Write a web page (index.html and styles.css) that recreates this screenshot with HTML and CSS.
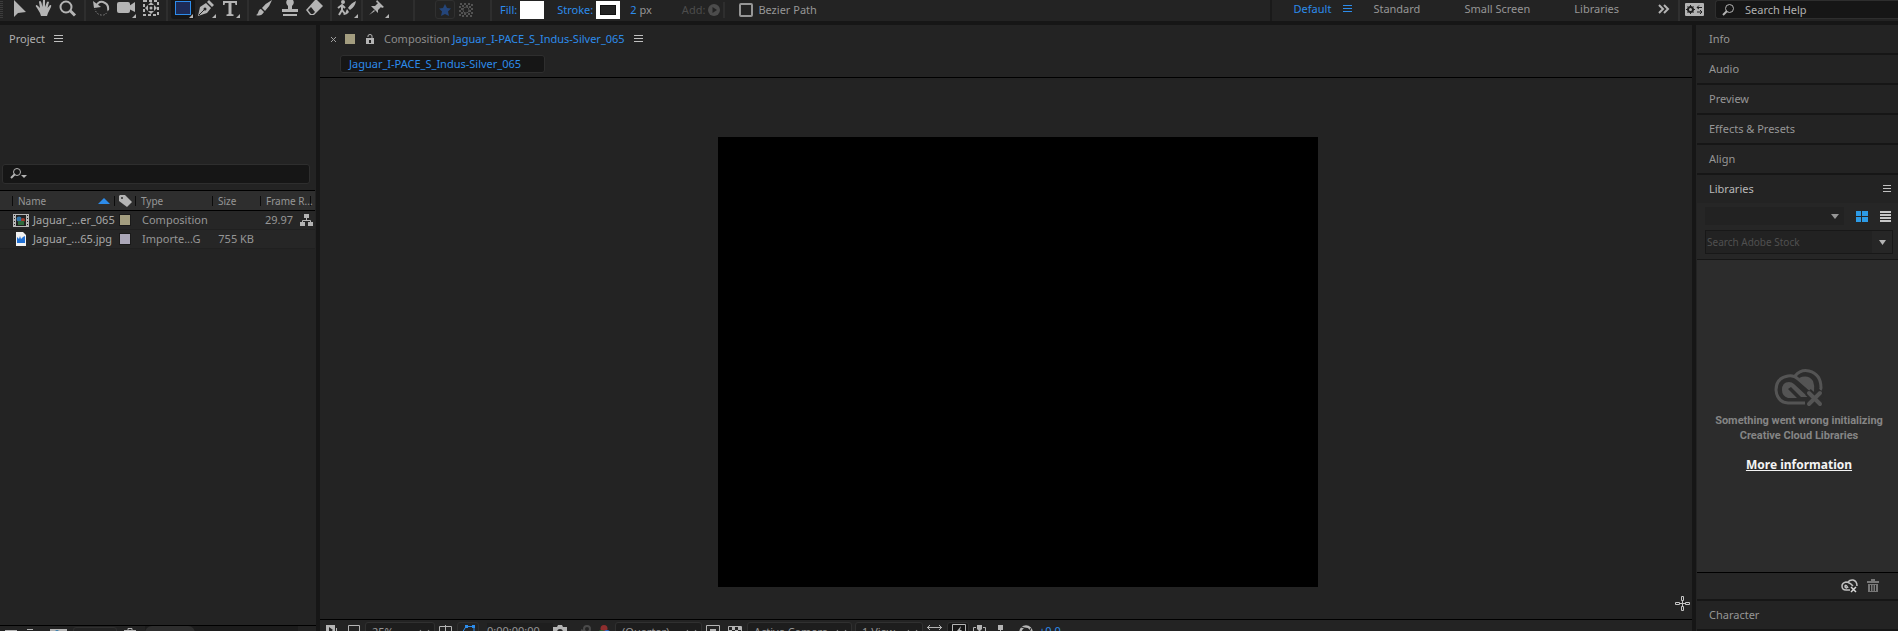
FILE: index.html
```
<!DOCTYPE html>
<html lang="en">
<head>
<meta charset="utf-8">
<title>Composition editor</title>
<link rel="stylesheet" href="styles.css">
</head>
<body>
<header class="toolbar">
  <span class="grip"></span>
  <div class="tools">
    <button class="tool" aria-label="Selection"><svg width="20" height="20"><path d="M4 0V17L8 13L16 12Z"/></svg></button>
    <button class="tool" aria-label="Hand"><svg width="20" height="20"><path d="M3 8Q1 6 2 5Q3 4.500 6 8L5 2Q5 1 6 1Q7 1 7.500 3L8.500 7L9 0H11V7L13 2Q14 1 15 2L13.500 8L16 5Q18 4.500 17 7L14 13L13 16H7L6 13Z"/></svg></button>
    <button class="tool" aria-label="Zoom"><svg width="20" height="20"><circle class="line2" cx="8" cy="7" r="5.500"/><path class="line3" d="M12 10.500L17 15.500"/></svg></button>
  </div>
  <div class="tools tight">
    <button class="tool" aria-label="Rotation"><svg width="20" height="20"><path class="line2" d="M4 7Q6 1 11 2Q17 4 16 10"/><path d="M1 1L2 8L9 7Z"/><path class="dots" d="M16 10Q14 16 9 15Q4 14 3 9"/></svg></button>
    <button class="tool wide" aria-label="Camera"><svg width="24" height="20"><rect x="2" y="2" width="13" height="11" rx="2"/><path d="M14 6L20 2V12L14 9ZM21 14V18H17Z"/></svg></button>
    <button class="tool" aria-label="Pan behind"><svg width="20" height="20"><rect class="dash" x="3" y="1" width="14" height="14"/><path d="M10 2L13 5H7ZM10 14L13 11H7ZM4 8L7 5V11ZM16 8L13 5V11Z"/><circle cx="10" cy="8" r="1.500"/></svg></button>
  </div>
  <div class="tools tight">
    <button class="tool on" aria-label="Rectangle"><svg width="22" height="20"><rect x="3.500" y="1.500" width="15" height="13" fill="#1d2b57" stroke="#2d8ceb"/><path d="M21 14V18H17Z"/></svg></button>
    <button class="tool" aria-label="Pen"><svg width="24" height="20"><path d="M3 16L5 7L11 3L16 8L12 13ZM12 2L14 0L19 5L17 7Z"/><path d="M4 15L10 9" stroke="#232323"/><circle cx="10" cy="9" r="1.500" fill="#232323"/><path d="M21 14V18H17Z"/></svg></button>
    <button class="tool wide" aria-label="Type"><svg width="24" height="20"><path d="M3 1H17V5H15.500L15 3H11.500V14L13.500 14.500V16H6.500V14.500L8.500 14V3H5L4.500 5H3ZM20 14V18H16Z"/></svg></button>
  </div>
  <div class="tools tight">
    <button class="tool wide" aria-label="Brush"><svg width="24" height="20"><path d="M19 0Q13 3 9 8L12 11Q17 6 19 0ZM8 9Q6 9 5 13Q4 15 3 15Q8 17 11 12Z"/></svg></button>
    <button class="tool wide" aria-label="Clone stamp"><svg width="24" height="20"><path d="M9 0H15Q17 3 14 6V9H20V12H4V9H10V6Q7 3 9 0ZM5 14H19V16H5Z"/></svg></button>
    <button class="tool wide" aria-label="Eraser"><svg width="24" height="20"><path d="M12 0H14L20 6L11 15H7L3 10Z"/><path d="M5 10L8 7L12 12L10 14H8Z" fill="#232323"/></svg></button>
  </div>
  <div class="tools tight">
    <button class="tool roto" aria-label="Roto brush"><svg width="24" height="20"><circle cx="8" cy="2" r="2"/><path class="line2" d="M3 8L7 5L10 8M7 5V10L4 15M7 10L10 14"/><path d="M21 1Q16 3 13 8L15 10Q20 7 21 1ZM12 9L14 12Q12 15 8 15Q11 13 12 9ZM23 14V18H19Z"/></svg></button>
  </div>
  <div class="tools last">
    <button class="tool wide" aria-label="Puppet pin"><svg width="24" height="20"><path d="M10 0L17 7L15 8L14 7L11 10V13L4 6L8 6L11 3L9 2ZM7 10L2 15L8 11ZM22 14V18H18Z"/></svg></button>
  </div>
  <div class="shape-mode">
    <button class="mode box" aria-label="Creates shape"><svg width="18" height="18"><path fill="#24457a" d="M9 3L11 7L15 7.500L12 10.500L13 15L9 13L5 15L6 10.500L3 7.500L7 7Z"/></svg></button>
    <button class="mode" aria-label="Creates mask"><svg width="16" height="18"><path fill="none" stroke="#525252" stroke-width="2" stroke-dasharray="2 2" d="M2 3H14V15H2ZM4 5H12V13H4Z"/><circle cx="8" cy="9" r="3" fill="#232323" stroke="#525252"/></svg></button>
  </div>
  <div class="options">
    <button class="link">Fill:</button><button class="swatch fill" aria-label="Fill colour"></button>
    <button class="link stroke">Stroke:</button><button class="swatch outline" aria-label="Stroke colour"></button>
    <span class="width"><button class="link">2</button> px</span>
    <button class="add" disabled>Add: <svg width="12" height="12"><circle cx="6" cy="6" r="6" fill="#4c4c4c"/><path d="M4.500 3L9 6L4.500 9Z" fill="#232323"/></svg></button>
    <label class="bezier"><input type="checkbox">Bezier Path</label>
  </div>
  <nav class="workspaces">
    <button class="active">Default <svg width="9" height="8"><path class="menu-lines" d="M0 .500H9M0 3.500H9M0 6.500H9"/></svg></button>
    <button>Standard</button>
    <button>Small Screen</button>
    <button>Libraries</button>
    <button class="more" aria-label="More workspaces"><svg width="12" height="10"><path d="M1 1L5 5L1 9M6 1L10 5L6 9"/></svg></button>
  </nav>
  <button class="sync" aria-label="Sync settings"><svg width="19" height="13"><rect width="19" height="13" rx="1" fill="#b4b4b4"/><circle cx="5.500" cy="6.500" r="2.500" fill="none" stroke="#222" stroke-width="2"/><path d="M5.500 2V4M5.500 9V11M1 6.500H3M8 6.500H10M2.500 3.500L4 5M8.500 3.500L7 5M2.500 9.500L4 8M8.500 9.500L7 8M12 4.500H17M14 2.500L12 4.500L14 6M12 9H17M15 7L17 9L15 11" fill="none" stroke="#222"/></svg></button>
  <label class="help"><svg width="12" height="12"><circle class="line1" cx="7.500" cy="4.500" r="4"/><path class="line2" d="M5 7L1 11"/></svg><input type="search" placeholder="Search Help" aria-label="Search Help"></label>
</header>

<main class="work">
  <section class="panel project">
    <h2 class="title">Project <button class="menu" aria-label="Project menu"><svg width="9" height="8"><path class="menu-lines" d="M0 .500H9M0 3.500H9M0 6.500H9"/></svg></button></h2>
    <div class="preview"></div>
    <label class="find"><svg width="18" height="12"><circle class="line1" cx="7" cy="4" r="3.500"/><path class="line2" d="M5 6L1 10"/><path d="M11 7H17L14 10Z"/></svg><input type="search" aria-label="Search project"></label>
    <table class="items">
      <colgroup><col class="c-name"><col class="c-label"><col class="c-type"><col class="c-size"><col class="c-rate"><col class="c-flow"></colgroup>
      <thead><tr>
        <th class="first"><div>Name<svg width="12" height="6"><path fill="#2d8ceb" d="M0 6L6 0L12 6Z"/></svg></div></th>
        <th class="tag"><svg width="13" height="12"><path d="M0 1L1 0H6L13 7L8 12L0 6Z"/><circle cx="3" cy="3" r="1" fill="#2e2e2e"/></svg></th>
        <th>Type</th><th>Size</th><th colspan="2" class="rate">Frame R...</th>
      </tr></thead>
      <tbody>
        <tr><td class="name"><div><svg width="16" height="13"><rect width="16" height="13" fill="#b8b8b8"/><path stroke="#232323" stroke-dasharray="1 2" d="M1.500 1V13M14.500 1V13"/><rect x="3" y="1" width="10" height="11" fill="#222"/><circle cx="6" cy="5" r="2.500" fill="#3274a8"/><circle cx="10" cy="6" r="2" fill="#a23c2c"/><rect x="5" y="7" width="6" height="4" fill="#2f6a3c"/></svg>Jaguar_...er_065</div></td>
          <td><i class="chip sand"></i></td><td>Composition</td><td></td><td class="num">29.97</td>
          <td class="flow"><svg width="13" height="12"><path d="M4 0H9V4H4ZM0 8H5V12H0ZM8 8H13V12H8Z"/><path fill="none" stroke="#b4b4b4" d="M6.500 4V6.500M2.500 8V6.500H10.500V8"/></svg></td></tr>
        <tr><td class="name"><div><svg width="16" height="14"><path fill="#f2f2f2" d="M3 0H10L13 3V14H3Z"/><path fill="#2271d4" d="M4 5L6 7L7 4L8 7L10 5L12 4V11H4Z"/></svg>Jaguar_...65.jpg</div></td>
          <td><i class="chip lilac"></i></td><td>Importe...G</td><td class="num">755 KB</td><td></td><td></td></tr>
      </tbody>
    </table>
    <footer class="foot project-foot">
      <button aria-label="Interpret footage"><svg width="13" height="12"><path d="M0 2H12V12H0Z"/></svg></button>
      <button aria-label="New folder"><svg width="14" height="12"><path d="M0 1H6V3H13V12H0Z"/><path stroke="#232323" d="M0 2.500H6"/></svg></button>
      <button aria-label="New composition"><svg width="17" height="12"><path d="M0 1H17V12H0Z"/><path fill="#232323" d="M3 3H14V12H3Z"/><circle cx="7" cy="4" r="2" fill="#3a7fae"/></svg></button>
      <button class="bpc" aria-label="Bit depth"></button>
      <button aria-label="Delete"><svg width="12" height="12"><path fill="none" stroke="#b4b4b4" d="M0 2.500H12M4 2V.500H8V2M2.500 3V12H9.500V3"/></svg></button>
      <div class="scroll"><span></span></div>
    </footer>
  </section>

  <section class="panel comp">
    <div class="title comp-title">
      <button class="close" aria-label="Close"><svg width="5" height="6"><path d="M0 1L5 6M5 1L0 6"/></svg></button>
      <i class="chip sand big"></i>
      <svg width="9" height="10"><path d="M0 4H8V10H0Z"/><path class="line1" d="M2 3V2Q2 .500 4 .500Q6 .500 6 2V4"/><path fill="#232323" d="M3 6H5V9H3Z"/></svg>
      <h2>Composition <a href="#">Jaguar_I-PACE_S_Indus-Silver_065</a></h2>
      <button class="menu" aria-label="Composition menu"><svg width="9" height="8"><path class="menu-lines" d="M0 .500H9M0 3.500H9M0 6.500H9"/></svg></button>
    </div>
    <div class="crumbs"><a href="#">Jaguar_I-PACE_S_Indus-Silver_065</a></div>
    <div class="viewer">
      <div class="canvas"></div>
      <svg class="cursor" width="15" height="15"><path fill="none" stroke="#c4c4c4" d="M6.500 .500H8.500V4.500H6.500ZM6.500 10.500H8.500V14.500H6.500ZM.500 6.500H4.500V8.500H.500ZM10.500 6.500H14.500V8.500H10.500Z"/><path fill="#c4c4c4" d="M7 5H8V10H7ZM5 7H10V8H5Z"/></svg>
    </div>
    <footer class="foot comp-foot">
      <button class="i-preview" aria-label="Always preview"><svg width="14" height="14"><path d="M0 0H9V12H0Z"/><path fill="#232323" d="M3 2L7 5L3 8Z"/><path d="M10 3H11V14H10ZM12 6H13V14H12Z"/></svg></button>
      <button class="i-monitor" aria-label="Main viewer"><svg width="13" height="12"><path class="line1" d="M.500 .500H11.500V9.500H.500Z"/></svg></button>
      <span class="pick zoom"><select aria-label="Magnification"><option>25%</option></select></span>
      <button class="i-grid" aria-label="Grid and guides"><svg width="14" height="14"><path class="line1" d="M.500 1.500H12.500V13H.500ZM6.500 0V14M3 8H10"/></svg></button>
      <button class="i-mask box" aria-label="Mask visibility"><svg width="16" height="14"><path fill="none" stroke="#2d8ceb" d="M1 9L5 2.500H13V12"/><path fill="#2d8ceb" d="M11 1H14V4H11ZM4 1H7V4H4ZM0 7H3V10H0Z"/></svg></button>
      <button class="time">0:00:00:00</button>
      <button class="i-cam" aria-label="Take snapshot"><svg width="14" height="12"><path d="M0 2H4L5 0H9L10 2H14V12H0Z"/><circle cx="7" cy="7" r="3" fill="#232323"/></svg></button>
      <button class="i-show" aria-label="Show snapshot"><svg width="15" height="14"><g fill="none" stroke="#4a4a4a" stroke-width="2"><circle cx="10" cy="4" r="3"/><circle cx="4" cy="10" r="3"/><path d="M4 5L10 8"/></g></svg></button>
      <button class="i-rgb" aria-label="Channels"><svg width="13" height="14"><circle cx="6" cy="3.500" r="3.500" fill="#8e2e2e"/><circle cx="3.500" cy="8.500" r="3.500" fill="#2e6b35"/><circle cx="9" cy="8.500" r="3.500" fill="#2c6fd0"/></svg></button>
      <span class="pick quality"><select aria-label="Resolution"><option>(Quarter)</option></select></span>
      <button class="i-roi" aria-label="Region of interest"><svg width="14" height="13"><path class="line1" d="M.500 .500H13.500V12H.500Z"/><path d="M4 4H10V10H4Z"/></svg></button>
      <button class="i-alpha" aria-label="Transparency grid"><svg width="14" height="13"><path class="line1" d="M.500 1.500H13.500V12H.500Z"/><path d="M4 2H7V5H4ZM10 2H13V5H10ZM1 5H4V8H1ZM7 5H10V8H7ZM4 8H7V11H4Z"/></svg></button>
      <span class="pick view"><select aria-label="3D view"><option>Active Camera</option></select></span>
      <span class="pick layout"><select aria-label="View layout"><option>1 View</option></select></span>
      <button class="i-ratio" aria-label="Pixel aspect correction"><svg width="15" height="12"><path class="line1" d="M0 2.500H15M3 0L.500 2.500L3 5M12 0L14.500 2.500L12 5"/></svg></button>
      <button class="i-fast box dark" aria-label="Fast previews"><svg width="14" height="13"><path class="line1" d="M.500 .500H13.500V12H.500Z"/><path d="M9 2L5 7H7L6 11L10 6H8Z"/></svg></button>
      <button class="i-timeline" aria-label="Timeline"><svg width="13" height="14"><path d="M4 0H9V4L7 6V14H6V6L4 4Z"/><path class="line1" d="M3 2.500H.500V13M10 2.500H12.500V13"/></svg></button>
      <button class="i-flow" aria-label="Flowchart"><svg width="8" height="14"><path d="M1 0H6V5H4V8H6V14H1V8H3V5H1Z"/></svg></button>
      <button class="i-expo" aria-label="Reset exposure"><svg width="14" height="13"><circle cx="7" cy="7" r="5.500" fill="none" stroke="#b4b4b4" stroke-width="2.500"/><path stroke="#232323" d="M2 2L9 4M12 3L9 10M1 9L6 11"/></svg></button>
      <button class="link">+0.0</button>
    </footer>
  </section>

  <aside class="side">
    <h2 class="row">Info</h2>
    <h2 class="row">Audio</h2>
    <h2 class="row">Preview</h2>
    <h2 class="row">Effects &amp; Presets</h2>
    <h2 class="row">Align</h2>
    <section class="libs">
      <h2 class="row open">Libraries <button class="menu" aria-label="Libraries menu"><svg width="8" height="8"><path class="menu-lines" d="M0 .500H8M0 3.500H8M0 6.500H8"/></svg></button></h2>
      <div class="lib-tools">
        <div class="lib-line">
          <span class="lib-pick"><select aria-label="Library"><option></option></select></span>
          <button aria-label="Grid view"><svg width="12" height="11"><path fill="#2d9be6" d="M0 0H5V5H0ZM6 0H12V5H6ZM0 6H5V11H0ZM6 6H12V11H6Z"/></svg></button>
          <button aria-label="List view"><svg width="11" height="11"><path fill="#c8c8c8" d="M0 0H11V2H0ZM0 3H11V5H0ZM0 6H11V8H0ZM0 9H11V11H0Z"/></svg></button>
        </div>
        <div class="stock"><input type="search" placeholder="Search Adobe Stock" aria-label="Search Adobe Stock"><button aria-label="Search scope"><svg width="7" height="5"><path d="M0 0H7L3.500 5Z"/></svg></button></div>
      </div>
      <div class="lib-body">
        <svg class="cc" width="50" height="38" viewBox="0 0 50 38"><g fill="none" stroke="#545454" stroke-width="3"><path d="M21 7Q27 0 35 2Q47 5 47 19Q47 20 46 21M31 34H14Q3 33 2 21Q2 9 14 7Q20 6 24 10L38 22"/></g><path fill="#545454" d="M25 9Q34 5 39 12Q41 17 40 23L37 22L27 12ZM8 21Q8 13 15 13Q18 13 20 15L34 28H27L17 18L14 20L23 29H14Q8 27 8 21Z"/><path stroke="#2c2c2c" stroke-width="8" d="M34 23L48 36M48 23L34 36"/><path stroke="#545454" stroke-width="4" stroke-linecap="round" d="M35 24L46 35M46 24L35 35"/></svg>
        <p>Something went wrong initializing<br>Creative Cloud Libraries</p>
        <a href="#">More information</a>
      </div>
      <div class="lib-foot">
        <button aria-label="Creative Cloud status"><svg width="17" height="14" viewBox="0 0 17 14"><path fill="none" stroke="#c0c0c0" stroke-width="1.500" d="M7 3Q9 .500 12 1Q16 2 16 7M9 11H5Q1 11 1 7Q1 4 5 3Q8 3 12 7M7 9Q5 5 4 7Q4 9 6 9"/><path stroke="#d8d8d8" stroke-width="1.500" d="M10 8L15 13M15 8L10 13"/></svg></button>
        <button aria-label="Delete"><svg width="12" height="14"><path fill="#777" d="M0 2H4V0H8V2H12V4H0ZM1 5H11V13H1Z"/><path stroke="#232323" d="M3.500 6V12M6 6V12M8.500 6V12"/></svg></button>
      </div>
    </section>
    <h2 class="row">Character</h2>
    <h2 class="row">Paragraph</h2>
  </aside>
</main>
</body>
</html>
```
FILE: styles.css
```
* { box-sizing: border-box; }
body {
  margin: 0;
  height: 100vh;
  overflow: hidden;
  background: #161616;
  color: #969696;
  font: 11px/16px "Noto Sans", "Open Sans", sans-serif;
}
button, input, select { font: inherit; color: inherit; }
button {
  margin: 0;
  padding: 0;
  border: 0;
  background: none;
  display: inline-flex;
  align-items: center;
  justify-content: center;
  white-space: nowrap;
}
input { min-width: 0; border: 0; padding: 0; background: none; outline: 0; }
h2 { margin: 0; font: inherit; }
a, .link { color: #2d8ceb; text-decoration: none; }
svg { display: block; flex: none; fill: #b4b4b4; }
.line1, .line2, .line3 { fill: none; stroke: #b4b4b4; stroke-width: 1; }
.line2 { stroke-width: 2; }
.line3 { stroke-width: 3; }
.dots { fill: none; stroke: #b4b4b4; stroke-dasharray: 1 2; }
.dash { fill: none; stroke: #b4b4b4; stroke-width: 2; stroke-dasharray: 3 2; }
.menu-lines { stroke: #c0c0c0; }

/* toolbar */
.toolbar {
  display: flex;
  height: 21px;
  background: #232323;
  white-space: nowrap;
}
.grip {
  width: 3px;
  margin: 0 5px 3px 0;
  background: repeating-linear-gradient(#232323 0 1px, #3c3c3c 1px 2px);
}
.tools { display: flex; padding-right: 4px; margin-right: 4px; border-right: 2px solid #2e2e2e; }
.tools.tight { padding-right: 3px; margin-right: 3px; }
.tools.last { padding-right: 22px; margin-right: 20px; }
.tool { width: 24px; align-items: flex-start; }
.tool.wide { width: 25px; }
.tool.roto { width: 23px; }
.tool.on { height: 19px; background: #161616; border-radius: 0 0 3px 3px; }
.shape-mode { display: flex; gap: 3px; padding-right: 16px; border-right: 2px solid #2e2e2e; }
.mode.box { width: 20px; height: 19px; border: 1px solid #303030; border-radius: 3px; }
.mode { height: 19px; }
.options { display: flex; flex: 1; align-items: center; padding: 0 0 2px 8px; }
.swatch { width: 24px; height: 18px; margin-left: 3px; background: #fff; }
.link.stroke { margin-left: 13px; }
.swatch.outline { border: 4px solid #fff; background: #232323; outline: 1px solid #111; outline-offset: -5px; }
.width { margin-left: 10px; display: flex; gap: 3px; }
.add { margin-left: 30px; padding-right: 3px; gap: 3px; color: #4c4c4c; border-right: 2px solid #2e2e2e; }
.bezier { display: flex; align-items: center; gap: 5px; margin-left: 14px; }
.bezier input { appearance: none; width: 14px; height: 14px; margin: 0; border: 2px solid #969696; border-radius: 2px; }
.workspaces { display: flex; gap: 44px; padding: 0 8px 4px 22px; border-left: 2px solid #1a1a1a; border-right: 2px solid #303030; }
.workspaces .active { color: #2d8ceb; gap: 12px; margin-right: -23px; }
.workspaces .active .menu-lines { stroke: #2d8ceb; }
.workspaces .more { margin-left: -5px; }
.more path { fill: none; stroke: #b4b4b4; stroke-width: 2; }
.sync { margin: 0 11px 3px 5px; }
.help {
  display: flex;
  align-items: center;
  gap: 11px;
  width: 183px;
  height: 19px;
  padding-left: 6px;
  background: #161616;
  border: 2px solid #2e2e2e;
  border-width: 1px 0 1px 1px;
  border-radius: 3px 0 0 3px;
}
.help input { width: 120px; }
.help input::placeholder { color: #b0b0b0; opacity: 1; }

/* columns; the lowest strip runs past the window edge */
.work {
  display: grid;
  grid-template-columns: 316px 1fr 202px;
  gap: 4px;
  height: calc(100vh + 7px);
  padding-top: 4px;
}
.panel { display: flex; flex-direction: column; min-width: 0; background: #232323; }
.title { display: flex; align-items: center; gap: 9px; height: 28px; padding-left: 9px; color: #b0b0b0; }
.foot { display: flex; align-items: flex-start; border-top: 1px solid #000; background: #232323; overflow: hidden; }
.chip { display: block; width: 10px; height: 10px; outline: 1px solid #1a1a1a; }
.sand { background: #a39d7f; }
.lilac { background: #aba7b8; }

/* project */
.preview { height: 110px; }
.find {
  display: flex;
  align-items: center;
  height: 20px;
  margin: 1px 6px 6px 2px;
  padding-left: 7px;
  background: #161616;
  border: 1px solid #2e2e2e;
  border-radius: 3px;
}
.find input { flex: 1; }
.items { width: 315px; table-layout: fixed; border-collapse: collapse; }
.c-name { width: 114px; }
.c-label { width: 21px; }
.c-type { width: 77px; }
.c-size { width: 48px; }
.c-rate { width: 39px; }
.items thead tr { height: 20px; background: #2e2e2e; border-top: 1px solid #000; border-bottom: 1px solid #000; }
.items th {
  padding: 0 0 0 6px;
  font-weight: 400;
  font-size: 10px;
  text-align: left;
  background: linear-gradient(#0c0c0c, #0c0c0c) left center / 1px 10px no-repeat;
}
.items th.first { padding: 0 4px 0 18px; background-position: 12px center; }
.items th.tag { padding-left: 5px; }
.first div { display: flex; align-items: center; justify-content: space-between; }
.items th.rate { background: linear-gradient(#0c0c0c, #0c0c0c) left center / 1px 10px no-repeat, linear-gradient(#0c0c0c, #0c0c0c) 50px center / 1px 10px no-repeat; }
.items tbody tr { height: 19px; background: #262626; border-bottom: 1px solid #202020; }
.items td { padding: 0 0 0 7px; white-space: nowrap; }
.items td:nth-child(2) { padding-left: 6px; }
.items td.name { padding: 0 0 0 13px; color: #a8a8a8; }
.name div { display: flex; align-items: center; gap: 4px; }
.items td.num { padding: 0 6px 0 0; text-align: right; }
.items td.flow { padding: 0 0 0 1px; }
.project-foot { height: 34px; margin-top: auto; padding-left: 5px; }
.project-foot button { margin: 2px 9px 0 0; }
.project-foot .bpc { width: 44px; height: 20px; margin: 1px 7px 0 -3px; border: 1px solid #303030; border-radius: 3px; }
.scroll { flex: 1; height: 16px; margin-right: 18px; background: #1c1c1c; }
.scroll span { display: block; width: 50px; height: 14px; border-radius: 7px; background: #2e2e2e; }

/* composition */
.comp-title { height: 30px; padding: 0 0 2px 11px; color: #8c8c8c; }
.comp-title .chip { margin-right: 2px; outline: 0; }
.close path { fill: none; stroke: #a0a0a0; }
.crumbs { padding: 0 20px 4px; border-bottom: 1px solid #000; }
.crumbs a { display: block; width: 205px; height: 18px; padding-left: 8px; line-height: 16px; background: #161616; border: 1px solid #2e2e2e; border-radius: 3px; }
.viewer { position: relative; display: flex; flex: 1; align-items: center; justify-content: center; padding: 26px 0 0 24px; }
.canvas { width: 600px; aspect-ratio: 4 / 3; background: #000; }
.cursor { position: absolute; right: 2px; bottom: 8px; }
.comp-foot { height: 40px; padding-left: 6px; }
.comp-foot > button { height: 16px; margin-top: 5px; align-items: flex-start; justify-content: flex-start; }
.comp-foot .box { height: 19px; margin-top: 2px; padding: 1px 0 0 3px; border: 1px solid #303030; border-radius: 3px; }
.comp-foot .dark { background: #161616; padding-left: 4px; }
.pick { position: relative; margin-top: 2px; }
.pick::after {
  content: "";
  position: absolute;
  right: 7px;
  top: 5px;
  width: 6px;
  height: 6px;
  border: solid #969696;
  border-width: 0 1px 1px 0;
  transform: rotate(45deg);
}
.pick select { appearance: none; width: 100%; height: 20px; padding: 0 0 0 6px; background: #1d1d1d; border: 1px solid #303030; border-radius: 3px; }
.i-preview { width: 22px; }
.i-monitor { width: 17px; }
.zoom { width: 70px; margin-right: 4px; }
.i-grid { width: 18px; }
.i-mask { width: 22px; margin-right: 8px; }
.comp-foot .time { width: 66px; height: 18px; margin-top: 3px; background: #1e1e1e; }
.i-cam { width: 24px; }
.i-show { width: 21px; }
.i-rgb { width: 17px; }
.quality { width: 87px; margin-right: 4px; }
.i-roi { width: 22px; }
.i-alpha { width: 19px; }
.view { width: 105px; margin-right: 3px; }
.layout { width: 68px; margin-right: 4px; }
.i-ratio { width: 20px; }
.i-fast { width: 22px; margin-right: 4px; }
.i-timeline { width: 24px; }
.i-flow { width: 22px; }
.i-expo { width: 14px; }
.comp-foot .link { margin-left: 6px; margin-top: 3px; }

/* side panels */
.side { display: flex; flex-direction: column; gap: 2px; padding-left: 1px; background: #161616; box-shadow: inset 1px 0 #232323; }
.row { display: flex; flex: none; align-items: center; justify-content: space-between; height: 28px; padding: 0 7px 0 12px; background: #232323; }
.row.open { color: #b8b8b8; }
.libs { display: flex; flex: 1; flex-direction: column; min-height: 0; }
.lib-tools { padding: 4px 5px 5px 8px; background: #262626; border-bottom: 1px solid #161616; }
.lib-line { display: flex; align-items: center; margin-bottom: 5px; gap: 12px; padding-right: 2px; }
.lib-pick { position: relative; flex: 1; }
.lib-pick select { appearance: none; display: block; width: 100%; height: 18px; border: 0; background: #222; }
.lib-pick::after { content: ""; position: absolute; right: 5px; top: 7px; border: 4px solid transparent; border-top: 5px solid #969696; border-bottom: 0; }
.stock { display: flex; height: 24px; border: 1px solid #181818; background: #222; }
.stock input { flex: 1; padding-left: 1px; font-size: 10px; }
.stock input::placeholder { color: #505050; opacity: 1; }
.stock button { width: 20px; background: #262626; }
.lib-body { display: flex; flex: 1; flex-direction: column; align-items: center; padding: 109px 0 0 3px; background: #2c2c2c; text-align: center; }
.lib-body p { margin: 6px 0 14px; font: bold 11px/15px Roboto, sans-serif; color: #858585; }
.lib-body a { font-weight: 700; font-size: 12px; color: #f4f4f4; text-decoration: underline; }
.lib-foot { display: flex; justify-content: flex-end; gap: 9px; height: 27px; padding-right: 19px; background: #262626; border-top: 1px solid #000; }
```
